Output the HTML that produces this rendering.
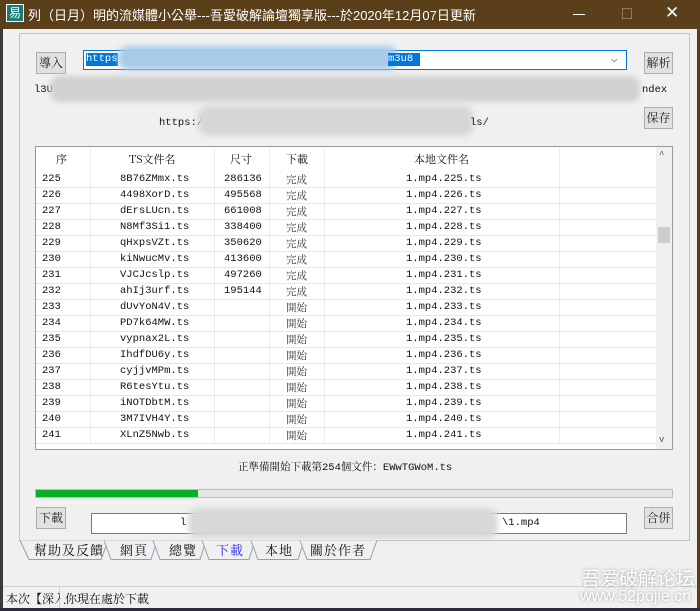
<!DOCTYPE html>
<html><head><meta charset="utf-8"><style>
*{margin:0;padding:0;box-sizing:border-box}
body{width:700px;height:611px;overflow:hidden;background:#f0f0f0;font-family:"Liberation Mono","Noto Sans CJK TC",monospace;font-size:11px;color:#111;position:relative}
.a{position:absolute}
.title{left:0;top:0;width:700px;height:29px;background:#5b3f1a;color:#fff;font-family:"Liberation Sans","Noto Sans CJK TC",sans-serif;font-size:13px}
.btn{position:absolute;background:#e1e1e1;border:1px solid #adadad;font-family:"Noto Serif CJK SC","Noto Sans CJK TC",serif;font-size:12px;text-align:center;line-height:20px;color:#222}
.blur{position:absolute;background:#d4d4d4;filter:blur(3px);border-radius:10px}
.row{position:absolute;left:36px;width:620px;height:16px;border-bottom:1px solid #e6e6e6;line-height:15px;font-size:10.5px}
.row span{position:absolute;top:0}
.vl{position:absolute;top:148px;width:1px;height:300px;background:#ececec}
.tab{position:absolute;top:540px;height:19px;font-family:"Noto Serif CJK SC","Noto Sans CJK TC",serif;font-size:13px;line-height:19px;letter-spacing:1px}
</style></head><body>
<div class="a title">
 <div class="a" style="left:6px;top:4px;width:18px;height:18px;background:#1a7a78;border:1px solid #fff;color:#fff;font-size:12px;line-height:16px;text-align:center">易</div>
 <div class="a" style="left:28px;top:5px;font-family:'Liberation Sans','Noto Sans CJK TC',sans-serif">列（日月）明的流媒體小公舉---吾愛破解論壇獨享版---於2020年12月07日更新</div>
 <div class="a" style="left:573px;top:14px;width:12px;height:1px;background:#fff"></div>
 <div class="a" style="left:622px;top:8px;width:10px;height:11px;border:1px solid #8a7a60"></div>
 <div class="a" style="left:665px;top:3px;font-size:17px">✕</div>
</div>
<div class="a" style="left:0;top:29px;width:3px;height:582px;background:#3a3a3a"></div>
<div class="a" style="left:697px;top:29px;width:3px;height:582px;background:#5b3f1a"></div>
<div class="a" style="left:0;top:608px;width:700px;height:3px;background:#2a2a3a"></div>
<div class="a" style="left:19px;top:33px;width:671px;height:508px;border:1px solid #b9c3c9"></div>

<div class="btn" style="left:36px;top:52px;width:30px;height:22px">導入</div>
<div class="a" style="left:83px;top:50px;width:544px;height:20px;border:1px solid #0078d7;background:#fff"></div>
<div class="a" style="left:86px;top:53px;width:32px;height:13px;background:#0078d7;color:#fff;font-size:10.5px;line-height:13px">https</div>
<div class="blur" style="left:118px;top:46px;width:280px;height:24px;background:#a9cbea"></div>
<div class="a" style="left:388px;top:53px;width:32px;height:13px;background:#0078d7;color:#fff;font-size:10.5px;line-height:13px">m3u8</div>
<div class="a" style="left:611px;top:52px;font-size:11px;color:#444">⌵</div>
<div class="btn" style="left:644px;top:52px;width:29px;height:22px">解析</div>
<div class="a" style="left:34px;top:84px;font-size:10.5px">l3U</div>
<div class="blur" style="left:50px;top:76px;width:590px;height:26px;background:#d0d0d0"></div>
<div class="a" style="left:642px;top:84px;font-size:10.5px">ndex</div>
<div class="a" style="left:159px;top:117px;font-size:10.5px">https:/</div>
<div class="blur" style="left:198px;top:106px;width:275px;height:30px;background:#d6d6d6"></div>
<div class="a" style="left:470px;top:117px;font-size:10.5px">ls/</div>
<div class="btn" style="left:644px;top:107px;width:29px;height:22px">保存</div>

<div class="a" style="left:35px;top:146px;width:638px;height:304px;border:1px solid #999;background:#fff"></div>
<div class="a" style="left:656px;top:147px;width:16px;height:302px;background:#f0f0f0"></div>
<div class="a" style="left:659px;top:150px;font-size:9px;color:#555">^</div>
<div class="a" style="left:658px;top:227px;width:12px;height:16px;background:#cdcdcd"></div>
<div class="a" style="left:659px;top:435px;font-size:9px;color:#555">v</div>
<div class="vl" style="left:90px"></div><div class="vl" style="left:214px"></div><div class="vl" style="left:269px"></div><div class="vl" style="left:324px"></div><div class="vl" style="left:559px"></div>
<div class="a" style="left:36px;top:148px;width:620px;height:24px;font-family:'Noto Serif CJK SC',serif;font-size:11px;line-height:22px">
 <span class="a" style="left:20px">序</span><span class="a" style="left:93px">TS文件名</span><span class="a" style="left:194px">尺寸</span><span class="a" style="left:250px">下載</span><span class="a" style="left:378px">本地文件名</span>
</div>
<div id="rows"></div>
<script>
var d=[["225","8B76ZMmx","286136","完成"],["226","4498XorD","495568","完成"],["227","dErsLUcn","661008","完成"],["228","N8Mf3Si1","338400","完成"],["229","qHxpsVZt","350620","完成"],["230","kiNwucMv","413600","完成"],["231","VJCJcslp","497260","完成"],["232","ahIj3urf","195144","完成"],["233","dUvYoN4V","","開始"],["234","PD7k64MW","","開始"],["235","vypnax2L","","開始"],["236","IhdfDU6y","","開始"],["237","cyjjvMPm","","開始"],["238","R6tesYtu","","開始"],["239","iNOTDbtM","","開始"],["240","3M7IVH4Y","","開始"],["241","XLnZ5Nwb","","開始"]];
var h="";d.forEach(function(r,i){h+='<div class="row" style="top:'+(172+i*16)+'px"><span style="left:6px">'+r[0]+'</span><span style="left:84px">'+r[1]+'.ts</span><span style="left:188px">'+r[2]+'</span><span style="left:250px;font-family:\'Noto Serif CJK SC\',serif;font-size:10.5px;color:#333">'+r[3]+'</span><span style="left:370px">1.mp4.'+r[0]+'.ts</span></div>'});
document.getElementById("rows").innerHTML=h;
</script>
<div class="a" style="left:36px;top:444px;width:620px;height:5px;background:#fff"></div>

<div class="a" style="left:238px;top:459px;font-size:10.5px"><span style="font-family:'Noto Serif CJK SC',serif">正準備開始下載第</span>254<span style="font-family:'Noto Serif CJK SC',serif">個文件：</span>EWwTGWoM.ts</div>
<div class="a" style="left:35px;top:489px;width:638px;height:9px;background:#e6e6e6;border:1px solid #bcbcbc"></div>
<div class="a" style="left:36px;top:490px;width:162px;height:7px;background:#06b025"></div>
<div class="btn" style="left:36px;top:507px;width:30px;height:22px">下載</div>
<div class="a" style="left:91px;top:513px;width:536px;height:21px;border:1px solid #7a7a7a;background:#fff"></div>
<div class="a" style="left:180px;top:517px;font-size:10.5px">l</div>
<div class="blur" style="left:188px;top:508px;width:310px;height:30px;background:#d8d8d8"></div>
<div class="a" style="left:502px;top:517px;font-size:10.5px">\1.mp4</div>
<div class="btn" style="left:644px;top:507px;width:29px;height:22px">合併</div>

<svg class="a" style="left:0;top:540px" width="400" height="22">
<g fill="#f0f0f0" stroke="#90a4ae" stroke-width="1">
<path d="M20 0.5 L29 19.5 L101 19.5 L108 0.5"/>
<path d="M104 0.5 L111 19.5 L151 19.5 L157 0.5"/>
<path d="M153 0.5 L160 19.5 L200 19.5 L206 0.5"/>
<path d="M202 0.5 L209 19.5 L249 19.5 L255 0.5"/>
<path d="M251 0.5 L258 19.5 L298 19.5 L304 0.5"/>
<path d="M300 0.5 L307 19.5 L370 19.5 L377 0.5"/>
</g></svg>
<div class="tab" style="left:34px">幫助及反饋</div>
<div class="tab" style="left:120px">網頁</div>
<div class="tab" style="left:169px">總覽</div>
<div class="tab" style="left:216px;color:#2a2aee">下載</div>
<div class="tab" style="left:265px">本地</div>
<div class="tab" style="left:310px">關於作者</div>

<div class="a" style="left:3px;top:586px;width:694px;height:1px;background:#d0d0d0"></div>
<div class="a" style="left:59px;top:587px;width:1px;height:21px;background:#d0d0d0"></div>
<div class="a" style="left:6px;top:590px;font-family:'Noto Serif CJK SC',serif;font-size:12px">本次【深入</div>
<div class="a" style="left:60px;top:587px;width:4px;height:20px;background:#f0f0f0"></div>
<div class="a" style="left:65px;top:590px;font-family:'Noto Serif CJK SC',serif;font-size:12px">你現在處於下載</div>
<div class="a" style="left:581px;top:564px;color:#fff;font-family:'Noto Sans CJK SC',sans-serif;font-size:19px;text-shadow:0 0 3px #999">吾爱破解论坛</div>
<div class="a" style="left:580px;top:588px;color:#fff;font-family:'Liberation Sans',sans-serif;font-size:16px;text-shadow:0 0 3px #999">www.52pojie.cn</div>
</body></html>
